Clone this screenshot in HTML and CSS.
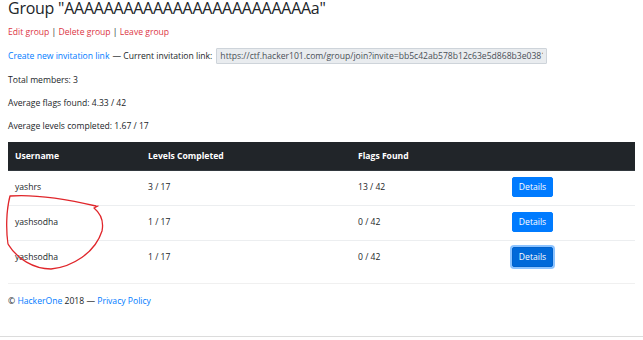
FILE: index.html
```html
<!DOCTYPE html>
<html>
<head>
<meta charset="utf-8">
<link rel="stylesheet" href="styles.css">
</head>
<body>
<div class="page">
  <main class="container">
    <h2 class="title">Group "AAAAAAAAAAAAAAAAAAAAAAAAAa"</h2>
    <p class="actions"><a class="danger" href="#">Edit group</a> | <a class="danger" href="#">Delete group</a> | <a class="danger" href="#">Leave group</a></p>
    <p class="invite"><a class="link" href="#">Create new invitation link</a> — Current invitation link: <input class="invite-input" type="text" readonly value="https://ctf.hacker101.com/group/join?invite=bb5c42ab578b12c63e5d868b3e03816f"></p>
    <p class="stat">Total members: 3</p>
    <p class="stat">Average flags found: 4.33 / 42</p>
    <p class="stat">Average levels completed: 1.67 / 17</p>
    <div class="table-wrap">
      <table class="members">
        <colgroup>
          <col class="c1"><col class="c2"><col class="c3"><col class="c4">
        </colgroup>
        <thead>
          <tr><th>Username</th><th>Levels Completed</th><th>Flags Found</th><th></th></tr>
        </thead>
        <tbody>
          <tr><td>yashrs</td><td>3 / 17</td><td>13 / 42</td><td><button class="btn">Details</button></td></tr>
          <tr><td>yashsodha</td><td>1 / 17</td><td>0 / 42</td><td><button class="btn">Details</button></td></tr>
          <tr><td>yashsodha</td><td>1 / 17</td><td>0 / 42</td><td><button class="btn btn-focus">Details</button></td></tr>
        </tbody>
      </table>
      <svg class="scribble" width="115" height="90" viewBox="0 0 115 90">
        <path d="M96 15 C70 9, 35 3, 10 5 C6 20, 6 40, 8 53 C17 68, 34 78, 51 78 C72 76, 95 62, 102 40 C104 30, 100 22, 94 17 L98 15" fill="none" stroke="#e0262b" stroke-width="1.3" stroke-linecap="round" stroke-linejoin="round"/>
      </svg>
    </div>
    <hr class="rule">
    <footer class="footer">© <a class="link" href="#">HackerOne</a> 2018 — <a class="link" href="#">Privacy Policy</a></footer>
  </main>
  <div class="bottom-line"></div>
</div>
</body>
</html>
```
FILE: styles.css
```css
html, body {
  margin: 0;
  padding: 0;
  background: #fff;
}
body {
  font-family: "Open Sans", "Noto Sans", sans-serif;
  font-size: 8.6px;
  line-height: 14px;
  color: #212529;
  overflow: hidden;
}
.page {
  width: 643px;
  height: 340px;
  position: relative;
}
.container {
  padding: 0 8px;
}
.title {
  font-size: 16px;
  font-weight: 400;
  letter-spacing: -0.25px;
  line-height: 16px;
  margin: 0 0 9px;
  color: #212529;
  white-space: nowrap;
}
p {
  margin: 0 0 9px;
}
a {
  text-decoration: none;
}
.danger { color: #dc3545; }
.link { color: #007bff; }
.invite {
  display: flex;
  align-items: center;
  gap: 3px;
  height: 16px;
  white-space: nowrap;
}
.invite-input {
  width: 331px;
  height: 16px;
  box-sizing: border-box;
  margin: 0 0 0 1px;
  padding: 0 3px;
  border: 1px solid #ced4da;
  background: #e9ecef;
  color: #495057;
  font-family: inherit;
  font-size: 8.6px;
  border-radius: 1px;
  outline: none;
}
.table-wrap {
  position: relative;
  margin-top: 8px;
}
.members {
  width: 627px;
  border-collapse: collapse;
  table-layout: fixed;
}
.c1 { width: 133px; }
.c2 { width: 210px; }
.c3 { width: 153px; }
.c4 { width: 131px; }
.members th {
  background: #212529;
  color: #fff;
  font-weight: 700;
  text-align: left;
  padding: 7px 7px 7px;
  height: 14px;
  border-bottom: 1px solid #32383e;
}
.members td {
  padding: 6px 7px 8px;
  height: 20px;
  border-top: 1px solid #eceef0;
  vertical-align: middle;
}
.btn {
  width: 41px;
  height: 20px;
  padding: 0;
  border: 1px solid #007bff;
  background: #007bff;
  color: #fff;
  font-family: inherit;
  font-size: 8.6px;
  border-radius: 2px;
  margin-left: 1px;
}
.btn-focus {
  background: #0069d9;
  border-color: #0062cc;
  box-shadow: 0 0 0 2px rgba(0, 123, 255, 0.45);
}
.scribble {
  position: absolute;
  left: -8px;
  top: 49px;
}
.rule {
  margin: 8px 0 0;
  border: 0;
  border-top: 1px solid #f0f0f0;
}
.footer {
  margin-top: 10px;
  line-height: 14px;
  color: #212529;
}
.bottom-line {
  position: absolute;
  left: 0;
  right: 0;
  top: 336px;
  border-top: 1px solid #dcdcdc;
}
```
